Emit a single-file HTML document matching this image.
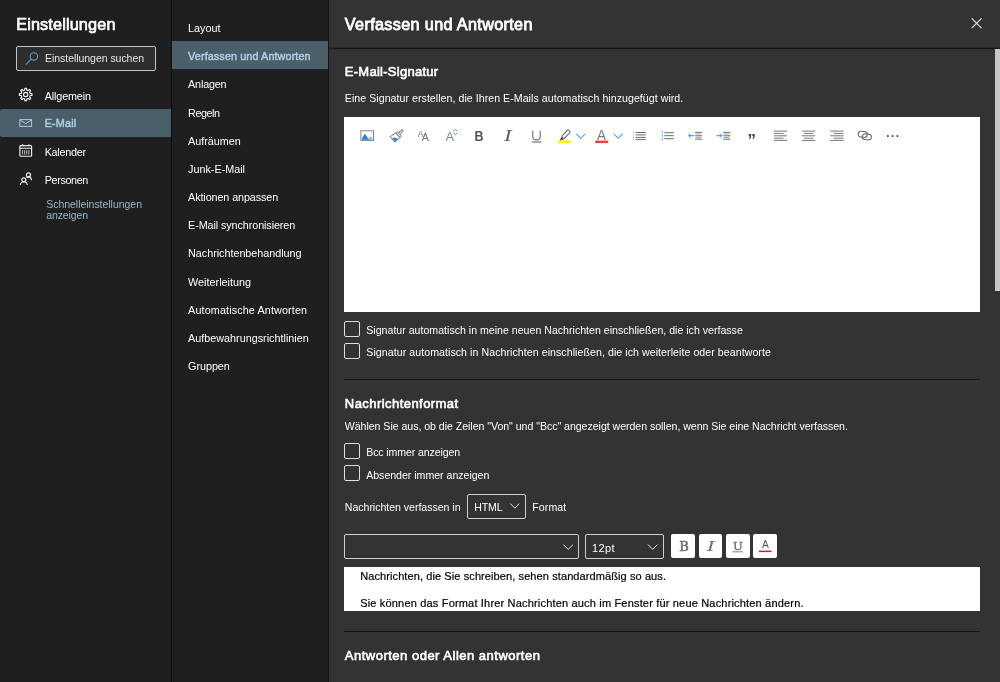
<!DOCTYPE html>
<html lang="de"><head><meta charset="utf-8"><title>Einstellungen</title>
<style>
*{box-sizing:border-box;margin:0;padding:0}
html,body{width:1000px;height:682px;overflow:hidden;background:#333333;font-family:"Liberation Sans",sans-serif}
body{position:relative}
.abs{position:absolute}
.t{position:absolute;white-space:nowrap;line-height:20px;height:20px}
#left{left:0;top:0;width:171px;height:682px;background:#1f1f1f}
#sep{left:171.1px;top:0;width:1.1px;height:682px;background:#0d0d0d}
#sep2{left:328.2px;top:0;width:1px;height:682px;background:#141414}
#mid{left:172px;top:0;width:156px;height:682px;background:#1f1f1f}
#right{left:328px;top:0;width:672px;height:682px;background:#333333}
#hdrline{left:329px;top:47.6px;width:671px;height:1.3px;background:#171717;box-shadow:0 -1px 1px rgba(0,0,0,0.18)}
.sel{background:#4a5f6a}
#search{left:15.6px;top:46.2px;width:140.4px;height:24.7px;border:1px solid #c4c4c4;border-radius:2px;background:#2e2e2e}
.white{background:#fff}
.cb{width:15.8px;height:15.5px;border:1px solid #e0e0e0;border-radius:2px;background:transparent}
.hr{height:1px;background:#161616}
.dd{border:1px solid #d0d0d0;border-radius:2px;background:#333}
.btn{background:#fff;border-radius:2px;width:23.5px;height:23.8px}
svg{position:absolute;overflow:visible}
#wrap{position:absolute;left:0;top:0;width:1000px;height:682px;will-change:transform}
.sb{-webkit-text-stroke:0.45px currentColor}

</style></head>
<body>
<div id="wrap">
<div id="left" class="abs"></div>
<div id="sep" class="abs"></div>
<div id="mid" class="abs"></div>
<div id="right" class="abs"></div>
<div id="hdrline" class="abs"></div>
<div id="sep2" class="abs"></div>
<div class="abs sel" style="left:0;top:108.8px;width:171.1px;height:28.1px;border-radius:2px 0 0 2px"></div>
<div class="abs sel" style="left:172.2px;top:41.1px;width:156px;height:28.3px"></div>
<div id="search" class="abs"></div>
<div class="abs white" style="left:344.1px;top:116.5px;width:635.9px;height:195.5px"></div>
<div class="abs cb" style="left:344.2px;top:321.2px"></div>
<div class="abs cb" style="left:344.2px;top:343.1px"></div>
<div class="abs hr" style="left:344px;top:378.7px;width:636px"></div>
<div class="abs cb" style="left:344.2px;top:443.3px"></div>
<div class="abs cb" style="left:344.2px;top:465.3px"></div>
<div class="abs dd" style="left:467.2px;top:493.5px;width:58.8px;height:25.2px"></div>
<div class="abs dd" style="left:343.8px;top:534.2px;width:235.1px;height:24.6px"></div>
<div class="abs dd" style="left:585.3px;top:534.2px;width:78.3px;height:24.6px"></div>
<div class="abs btn" style="left:671.2px;top:534px"></div>
<div class="abs btn" style="left:698.8px;top:534px"></div>
<div class="abs btn" style="left:726.1px;top:534px"></div>
<div class="abs btn" style="left:753.4px;top:534px"></div>
<div class="abs white" style="left:344.1px;top:566.8px;width:636px;height:44.2px"></div>
<div class="abs hr" style="left:344px;top:630.9px;width:636px"></div>
<div class="abs" style="left:995px;top:48.8px;width:5px;height:242.2px;background:#c8c8c8"></div>

<svg width="1000" height="682" viewBox="0 0 1000 682" style="left:0;top:0">
<g fill="none" stroke="#5fa2c2" stroke-width="1.1"><circle cx="33.9" cy="56.4" r="3.7"/><path d="M31.2 59.2 L25.9 64.6"/></g>
<g fill="none" stroke="#f4f4f4" stroke-width="1.15"><path d="M30.19 93.50 L31.94 93.61 L31.94 95.39 L30.19 95.50 L29.58 96.96 L30.74 98.28 L29.48 99.54 L28.16 98.38 L26.70 98.99 L26.59 100.74 L24.81 100.74 L24.70 98.99 L23.24 98.38 L21.92 99.54 L20.66 98.28 L21.82 96.96 L21.21 95.50 L19.46 95.39 L19.46 93.61 L21.21 93.50 L21.82 92.04 L20.66 90.72 L21.92 89.46 L23.24 90.62 L24.70 90.01 L24.81 88.26 L26.59 88.26 L26.70 90.01 L28.16 90.62 L29.48 89.46 L30.74 90.72 L29.58 92.04Z" stroke-linejoin="round"/><circle cx="25.7" cy="94.5" r="2.1"/></g>
<g fill="none" stroke="#aacde2" stroke-width="1"><rect x="19.9" y="119.6" width="11.7" height="6.8"/><path d="M19.9 119.9 L25.75 123.6 L31.6 119.9"/></g>
<g fill="none" stroke="#f0f0f0" stroke-width="1.15"><rect x="19.9" y="145.6" width="11.7" height="10.6" rx="0.8"/><path d="M19.9 148.2 H31.6 M22.6 144.2 V146 M28.9 144.2 V146"/><path d="M22.6 150 V154.5 M24.7 150 V154.5 M26.8 150 V154.5 M28.9 150 V154.5" stroke-width="0.9" opacity="0.85"/></g>
<g fill="none" stroke="#f0f0f0" stroke-width="1.15"><circle cx="28.5" cy="174.9" r="2"/><circle cx="23.8" cy="179.8" r="2"/><path d="M20.3 185 C20.6 182.6 22 181.7 23.8 181.7 C25.6 181.7 27 182.6 27.3 185"/><path d="M26.6 178 C27.2 177 28 176.8 28.5 176.8 C30.2 176.8 31.2 177.8 31.5 180.2"/></g>
<path d="M971.7 18.4 L981.5 28.2 M981.5 18.4 L971.7 28.2" stroke="#e6e6e6" stroke-width="1.1" fill="none"/>
<g><rect x="360.9" y="130.8" width="12.7" height="9.6" fill="#fff" stroke="#737373" stroke-width="0.9"/><path d="M367.4 139.8 L370.7 135.9 L373.1 139.8Z" fill="#8cbcf0"/><path d="M361.5 139.8 L364.7 133.5 L367.9 138.2 L369.2 139.8Z" fill="#2b7cd3"/><rect x="370.8" y="132.4" width="0.9" height="0.9" fill="#999"/></g>
<g stroke-linejoin="round"><path d="M399.4 133.6 L402 130.8" stroke="#707070" stroke-width="2.9" fill="none" stroke-linecap="round"/><path d="M399.4 133.6 L402 130.8" stroke="#fff" stroke-width="1.1" fill="none" stroke-linecap="round"/><path d="M397 131.6 L401.6 136.2 L400.2 137.4 L395.8 133 Z" fill="#fff" stroke="#6a6a6a" stroke-width="0.9"/><path d="M395.6 133.2 L400 137.6 L394.6 142.2 L390.2 136.6 Z" fill="#fff" stroke="#6a6a6a" stroke-width="0.9"/><path d="M392.2 137.6 C394 137 396.4 138.8 398.4 138.6 L394.8 141.4 Z" fill="#2b7cd3"/></g>
<text x="417.8" y="137.2" font-family="Liberation Sans, sans-serif" font-size="8.6" fill="#7a7a7a">A</text>
<text x="421.8" y="140.8" font-family="Liberation Sans, sans-serif" font-size="10.8" fill="#707070">A</text>
<text x="445.6" y="140.8" font-family="Liberation Sans, sans-serif" font-size="12.8" fill="#858585">A</text>
<path d="M453.2 131.2 L455.3 129.4 L457.4 131.2 M453.2 132.8 L455.3 134.6 L457.4 132.8" stroke="#4f97ea" stroke-width="1" fill="none"/>
<text x="474.6" y="140.8" font-family="Liberation Sans, sans-serif" font-size="14.8" font-weight="bold" fill="#555" textLength="9" lengthAdjust="spacingAndGlyphs">B</text>
<text x="503.9" y="140.8" font-family="Liberation Serif, serif" font-size="16" font-style="italic" fill="#606060" textLength="7.6" lengthAdjust="spacingAndGlyphs">I</text>
<path d="M532.8 130.4 V136.4 C532.8 141 540.2 141 540.2 136.4 V130.4" stroke="#666" stroke-width="1.05" fill="none"/><path d="M531.8 142 H541.2" stroke="#777" stroke-width="1.2"/>
<g><rect x="561.2" y="132.5" width="9.6" height="3.5" rx="1.4" fill="#fff" stroke="#555" stroke-width="0.95" transform="rotate(-46 566 134.25)"/><path d="M560 140.3 L561.5 137.2 L563.6 139.2 Z" fill="#4a4a4a" stroke="#4a4a4a" stroke-width="0.6" stroke-linejoin="round"/><rect x="557.8" y="140.5" width="12.8" height="2.6" fill="#fff100"/></g>
<path d="M576.2 133.8 L580.7 138.3 L585.2 133.8" stroke="#4a9fe8" stroke-width="1.1" fill="none"/>
<text x="597.1" y="140.3" font-family="Liberation Sans, sans-serif" font-size="14.4" fill="#7d7d7d" textLength="9" lengthAdjust="spacingAndGlyphs">A</text>
<rect x="595.2" y="140.6" width="13" height="2.5" fill="#e8433f"/>
<path d="M613.8 133.8 L618.2 138.3 L622.6 133.8" stroke="#4a9fe8" stroke-width="1.1" fill="none"/>
<g stroke="#6a6a6a" stroke-width="1"><path d="M635.6 132.5 H645.8"/><path d="M635.6 134.9 H645.8"/><path d="M635.6 137.4 H645.8"/><path d="M635.6 139.6 H645.8"/></g>
<g fill="#3a86e0"><rect x="633" y="132.1" width="0.9" height="0.9"/><rect x="633" y="134.5" width="0.9" height="0.9"/><rect x="633" y="137.0" width="0.9" height="0.9"/><rect x="633" y="139.2" width="0.9" height="0.9"/></g>
<g stroke="#6a6a6a" stroke-width="1"><path d="M664.4 132.7 H673.8"/><path d="M664.4 135.7 H673.8"/><path d="M664.4 138.7 H673.8"/></g>
<path d="M662.3 130.6 V141" stroke="#3a86e0" stroke-width="0.9" stroke-dasharray="2.6 1.1" opacity="0.8"/>
<g stroke="#6a6a6a" stroke-width="1"><path d="M695.0 132.4 H702.2"/><path d="M695.6 134.1 H701.0" opacity="0.6"/><path d="M695.0 135.8 H702.2"/><path d="M695.6 137.5 H701.0" opacity="0.6"/><path d="M695.0 139.2 H702.2"/></g>
<path d="M688.6 135.7 H694 M690.6 133.7 L688.6 135.7 L690.6 137.7" stroke="#3a86e0" stroke-width="1" fill="none"/>
<g stroke="#6a6a6a" stroke-width="1"><path d="M723.2 132.4 H730.4"/><path d="M723.8 134.1 H729.2" opacity="0.6"/><path d="M723.2 135.8 H730.4"/><path d="M723.8 137.5 H729.2" opacity="0.6"/><path d="M723.2 139.2 H730.4"/></g>
<path d="M716.6 135.7 H722 M720 133.7 L722 135.7 L720 137.7" stroke="#3a86e0" stroke-width="1" fill="none"/>
<text x="747.6" y="146.2" font-family="Liberation Sans, sans-serif" font-size="17" font-weight="bold" fill="#444">”</text>
<g stroke="#777" stroke-width="1"><path d="M774.0 131.1 H787.1"/><path d="M774.0 133.4 H783.7"/><path d="M774.0 135.8 H787.1"/><path d="M774.0 138.2 H783.7"/><path d="M774.0 140.4 H787.1"/></g>
<g stroke="#777" stroke-width="1"><path d="M801.8 131.1 H815.4"/><path d="M804.0 133.4 H813.6"/><path d="M801.8 135.8 H815.4"/><path d="M804.0 138.2 H813.6"/><path d="M801.8 140.4 H815.4"/></g>
<g stroke="#777" stroke-width="1"><path d="M830.0 131.1 H843.6"/><path d="M833.6 133.4 H843.6"/><path d="M830.0 135.8 H843.6"/><path d="M833.6 138.2 H843.6"/><path d="M830.0 140.4 H843.6"/></g>
<g fill="none" stroke="#666" stroke-width="1"><rect x="858.2" y="131.5" width="9.2" height="5.7" rx="2.85" transform="rotate(6 862.8 134.3)"/><rect x="862.2" y="134.1" width="9.2" height="5.7" rx="2.85" transform="rotate(6 866.8 136.9)"/></g>
<g fill="#3a3a3a"><rect x="887" y="135.2" width="1.7" height="1.7"/><rect x="891.8" y="135.2" width="1.7" height="1.7"/><rect x="896.6" y="135.2" width="1.7" height="1.7"/></g>
<path d="M510.4 503.6 L514.8 508.2 L519.2 503.6" stroke="#e8e8e8" stroke-width="1.0" fill="none"/>
<path d="M563.4 544.6 L568.2 549.4 L573.0 544.6" stroke="#e8e8e8" stroke-width="1.0" fill="none"/>
<path d="M648.0 544.6 L652.7 549.4 L657.4 544.6" stroke="#e8e8e8" stroke-width="1.0" fill="none"/>
<text x="679.3" y="551.3" font-family="DejaVu Serif, serif" font-size="12.4" fill="#707070" stroke="#707070" stroke-width="0.55" textLength="9.6" lengthAdjust="spacingAndGlyphs">B</text>
<text x="706.9" y="551.3" font-family="DejaVu Serif, serif" font-size="12.4" font-style="italic" fill="#707070" stroke="#707070" stroke-width="0.1" textLength="7.8" lengthAdjust="spacingAndGlyphs">I</text>
<text x="732.9" y="550" font-family="DejaVu Serif, serif" font-size="11.4" fill="#707070" stroke="#707070" stroke-width="0.4" textLength="9.8" lengthAdjust="spacingAndGlyphs">U</text>
<rect x="732.4" y="551.3" width="10.4" height="1" fill="#808080"/>
<text x="761.9" y="548" font-family="Liberation Sans, sans-serif" font-size="10.2" fill="#555">A</text>
<rect x="759" y="550.6" width="12.6" height="1.5" fill="#e81123"/>
</svg>

<span class="t sb" id="t0" style="left:16.2px;top:14.00px;font-size:16.3px;color:#ffffff;letter-spacing:0.126px;-webkit-text-stroke-width:0.65px;">Einstellungen</span>
<span class="t" id="t1" style="left:45.0px;top:48.00px;font-size:10.5px;color:#e6e6e6;letter-spacing:-0.041px;">Einstellungen suchen</span>
<span class="t" id="t2" style="left:44.7px;top:86.00px;font-size:10.8px;color:#ffffff;letter-spacing:-0.136px;">Allgemein</span>
<span class="t sb" id="t3" style="left:44.7px;top:113.00px;font-size:10.8px;color:#b0cee0;letter-spacing:0.184px;">E-Mail</span>
<span class="t" id="t4" style="left:44.7px;top:142.00px;font-size:10.8px;color:#ffffff;letter-spacing:-0.267px;">Kalender</span>
<span class="t" id="t5" style="left:44.7px;top:170.00px;font-size:10.8px;color:#ffffff;letter-spacing:-0.367px;">Personen</span>
<span class="t" id="t6" style="left:46.2px;top:194.00px;font-size:10.5px;color:#8fb9d2;letter-spacing:-0.026px;">Schnelleinstellungen</span>
<span class="t" id="t7" style="left:46.2px;top:205.00px;font-size:10.5px;color:#8fb9d2;letter-spacing:-0.103px;">anzeigen</span>
<span class="t" id="t8" style="left:188.1px;top:18.00px;font-size:10.8px;color:#ffffff;letter-spacing:-0.020px;">Layout</span>
<span class="t sb" id="t9" style="left:188.1px;top:46.00px;font-size:10.8px;color:#b0cee0;letter-spacing:0.111px;">Verfassen und Antworten</span>
<span class="t" id="t10" style="left:188.1px;top:74.00px;font-size:10.8px;color:#ffffff;letter-spacing:-0.189px;">Anlagen</span>
<span class="t" id="t11" style="left:188.1px;top:103.00px;font-size:10.8px;color:#ffffff;letter-spacing:-0.470px;">Regeln</span>
<span class="t" id="t12" style="left:188.1px;top:131.00px;font-size:10.8px;color:#ffffff;letter-spacing:-0.025px;">Aufräumen</span>
<span class="t" id="t13" style="left:188.1px;top:159.00px;font-size:10.8px;color:#ffffff;letter-spacing:-0.009px;">Junk-E-Mail</span>
<span class="t" id="t14" style="left:188.1px;top:187.00px;font-size:10.8px;color:#ffffff;letter-spacing:-0.108px;">Aktionen anpassen</span>
<span class="t" id="t15" style="left:188.1px;top:215.00px;font-size:10.8px;color:#ffffff;letter-spacing:-0.096px;">E-Mail synchronisieren</span>
<span class="t" id="t16" style="left:188.1px;top:243.00px;font-size:10.8px;color:#ffffff;letter-spacing:-0.032px;">Nachrichtenbehandlung</span>
<span class="t" id="t17" style="left:188.1px;top:272.00px;font-size:10.8px;color:#ffffff;letter-spacing:0.006px;">Weiterleitung</span>
<span class="t" id="t18" style="left:188.1px;top:300.00px;font-size:10.8px;color:#ffffff;letter-spacing:0.121px;">Automatische Antworten</span>
<span class="t" id="t19" style="left:188.1px;top:328.00px;font-size:10.8px;color:#ffffff;letter-spacing:-0.002px;">Aufbewahrungsrichtlinien</span>
<span class="t" id="t20" style="left:188.1px;top:356.00px;font-size:10.8px;color:#ffffff;letter-spacing:-0.047px;">Gruppen</span>
<span class="t sb" id="t21" style="left:344.8px;top:14.00px;font-size:16.2px;color:#ffffff;letter-spacing:0.349px;-webkit-text-stroke-width:0.8px;">Verfassen und Antworten</span>
<span class="t sb" id="t22" style="left:344.8px;top:61.50px;font-size:13.0px;color:#ffffff;letter-spacing:0.267px;-webkit-text-stroke-width:0.6px;">E-Mail-Signatur</span>
<span class="t" id="t23" style="left:344.8px;top:88.00px;font-size:10.6px;color:#ffffff;letter-spacing:0.048px;">Eine Signatur erstellen, die Ihren E-Mails automatisch hinzugefügt wird.</span>
<span class="t" id="t24" style="left:366.3px;top:320.00px;font-size:10.6px;color:#ffffff;letter-spacing:0.003px;">Signatur automatisch in meine neuen Nachrichten einschließen, die ich verfasse</span>
<span class="t" id="t25" style="left:366.3px;top:342.00px;font-size:10.6px;color:#ffffff;letter-spacing:0.063px;">Signatur automatisch in Nachrichten einschließen, die ich weiterleite oder beantworte</span>
<span class="t sb" id="t26" style="left:344.8px;top:393.50px;font-size:13.0px;color:#ffffff;letter-spacing:0.446px;-webkit-text-stroke-width:0.6px;">Nachrichtenformat</span>
<span class="t" id="t27" style="left:344.8px;top:416.00px;font-size:10.6px;color:#ffffff;letter-spacing:-0.041px;">Wählen Sie aus, ob die Zeilen &quot;Von&quot; und &quot;Bcc&quot; angezeigt werden sollen, wenn Sie eine Nachricht verfassen.</span>
<span class="t" id="t28" style="left:366.2px;top:442.00px;font-size:10.6px;color:#ffffff;letter-spacing:-0.121px;">Bcc immer anzeigen</span>
<span class="t" id="t29" style="left:366.2px;top:465.00px;font-size:10.6px;color:#ffffff;letter-spacing:-0.021px;">Absender immer anzeigen</span>
<span class="t" id="t30" style="left:344.8px;top:497.00px;font-size:10.6px;color:#ffffff;letter-spacing:-0.037px;">Nachrichten verfassen in</span>
<span class="t" id="t31" style="left:474.3px;top:497.00px;font-size:10.6px;color:#ffffff;letter-spacing:-0.186px;">HTML</span>
<span class="t" id="t32" style="left:532.3px;top:497.00px;font-size:10.6px;color:#ffffff;letter-spacing:0.073px;">Format</span>
<span class="t" id="t33" style="left:592.0px;top:538.00px;font-size:11.0px;color:#ffffff;letter-spacing:0.395px;">12pt</span>
<span class="t" id="t34" style="left:360.2px;top:566.00px;font-size:11.0px;color:#000;letter-spacing:0.096px;-webkit-text-stroke:0.2px #000;">Nachrichten, die Sie schreiben, sehen standardmäßig so aus.</span>
<span class="t" id="t35" style="left:360.2px;top:593.00px;font-size:11.0px;color:#000;letter-spacing:0.177px;-webkit-text-stroke:0.2px #000;">Sie können das Format Ihrer Nachrichten auch im Fenster für neue Nachrichten ändern.</span>
<span class="t sb" id="t36" style="left:344.8px;top:645.50px;font-size:13.0px;color:#ffffff;letter-spacing:0.498px;-webkit-text-stroke-width:0.6px;">Antworten oder Allen antworten</span>
</div>
</body></html>
